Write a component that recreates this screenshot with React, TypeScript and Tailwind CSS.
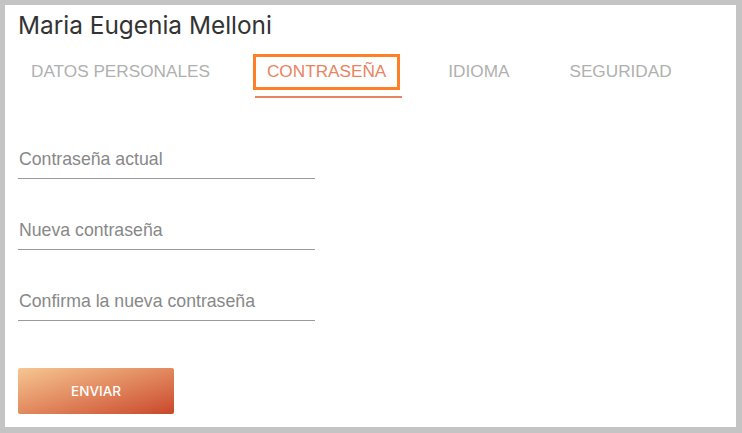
import React from "react";

const tabs = [
  { label: "DATOS PERSONALES", ml: "ml-0" },
  { label: "CONTRASEÑA", ml: "ml-[30px]", active: true },
  { label: "IDIOMA", ml: "ml-[35px]" },
  { label: "SEGURIDAD", ml: "ml-[34px]" },
];

const fields = ["Contraseña actual", "Nueva contraseña", "Confirma la nueva contraseña"];

const App: React.FC = () => {
  return (
    <div className="h-[433px] w-[742px] bg-[#c4c4c4] pt-[5px] pl-[5px] pr-[6px] pb-[6px]">
      <div className="h-full w-full bg-white pl-[13px]">
        <h1
          className="pt-[6px] text-[24.4px] leading-[29px] text-[#333333]"
          style={{ fontFamily: "Inter, 'Noto Sans', sans-serif" }}
        >
          Maria Eugenia Melloni
        </h1>

        {/* tabs */}
        <div
          className="mt-[14px] flex items-start"
          style={{ fontFamily: "'Liberation Sans', Arial, sans-serif" }}
        >
          {tabs.map((t) => (
            <div key={t.label} className={`flex flex-col ${t.ml}`}>
              <button
                className={
                  t.active
                    ? "h-[36px] border-[3px] border-[#ff7f27] px-[11px] text-[17.2px] leading-none text-[#e8845f]"
                    : "h-[36px] px-[13px] text-[17.2px] leading-none text-[#b0b0b0]"
                }
              >
                {t.label}
              </button>
              {t.active && <div className="mt-[6px] ml-[2px] h-[2px] w-full bg-[#e8855f]" />}
            </div>
          ))}
        </div>

        {/* form */}
        <form
          className="mt-[49px] flex w-[297px] flex-col"
          style={{ fontFamily: "'Liberation Sans', Arial, sans-serif" }}
        >
          {fields.map((f, i) => (
            <div
              key={f}
              className={`border-b border-[#9a9a9a] pb-[7px] text-[17.7px] leading-[24px] text-[#888888] ${
                i > 0 ? "mt-[39px]" : ""
              }`}
            >
              <span className="pl-px">{f}</span>
            </div>
          ))}
        </form>

        <button
          className="mt-[47px] h-[46px] w-[156px] rounded-[2px] bg-gradient-to-br from-[#f5c692] to-[#c8462a] text-[13.5px] font-medium text-white"
          style={{ fontFamily: "Inter, 'Noto Sans', sans-serif" }}
        >
          ENVIAR
        </button>
      </div>
    </div>
  );
};

export default App;
